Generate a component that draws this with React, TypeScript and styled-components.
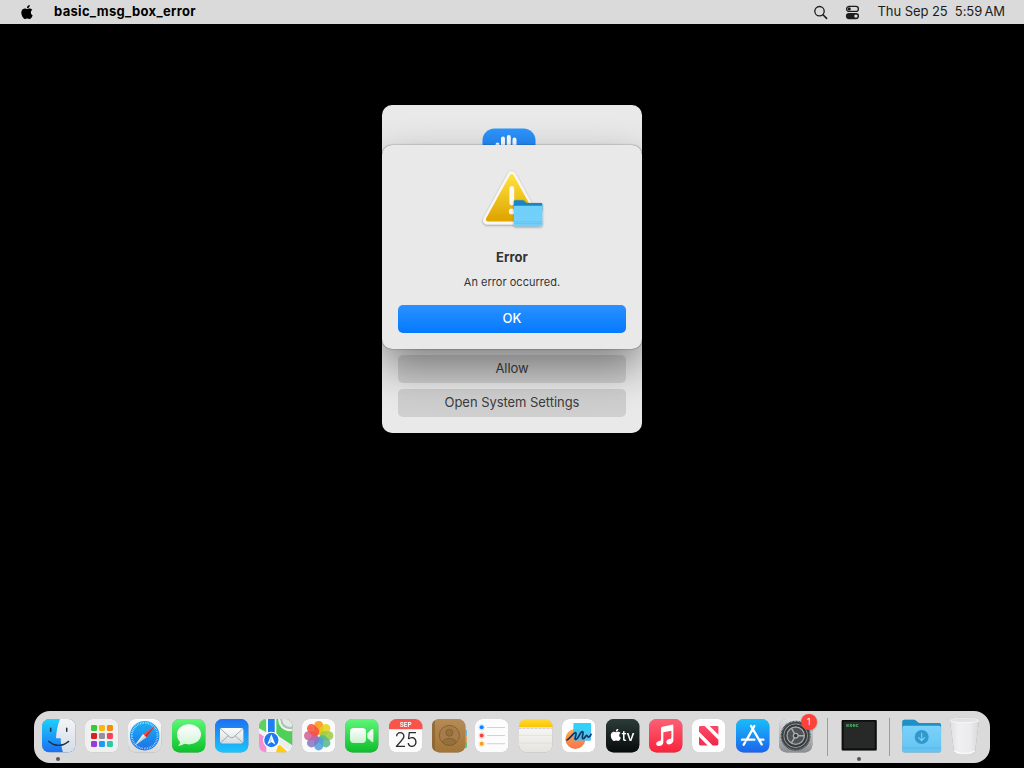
import React from 'react';
import styled, { createGlobalStyle } from 'styled-components';
import { SiApple } from 'react-icons/si';

const GlobalStyle = createGlobalStyle`
  * { box-sizing: border-box; }
  body { margin: 0; background: #000; overflow: hidden; }
`;

const Desktop = styled.div`
  display: flex;
  flex-direction: column;
  width: 1024px;
  height: 768px;
  background: #000;
  font-family: Inter, 'Liberation Sans', sans-serif;
  font-size: 13px;
`;

const MenuBar = styled.header`
  display: flex;
  align-items: center;
  justify-content: space-between;
  height: 24px;
  padding: 0 19px 0 20px;
  background: #dadada;
  color: #000;
`;

const MenuGroup = styled.div<{ $gap: number }>`
  display: flex;
  align-items: center;
  gap: ${(p) => p.$gap}px;
  height: 24px;
`;

const AppName = styled.span`
  padding-bottom: 2px;
  font-weight: 700;
  letter-spacing: 0.31px;
  line-height: 22px;
`;

const Clock = styled.span`
  padding-bottom: 2px;
  margin-left: 1px;
  color: #1c1c1c;
  letter-spacing: -0.07px;
  line-height: 22px;
  white-space: pre;
`;

const Workspace = styled.main`
  flex: 1;
  display: flex;
  flex-direction: column;
  align-items: center;
  justify-content: space-between;
  padding: 81px 0 5px;
`;

const Stack = styled.div`
  position: relative;
  width: 260px;
  height: 328px;
`;

const PermissionWindow = styled.section`
  display: flex;
  flex-direction: column;
  align-items: center;
  gap: 6px;
  height: 100%;
  padding: 23px 16px 16px;
  border-radius: 10px;
  background: #e9e9e9;
  overflow: hidden;
`;

const PermissionIcon = styled.svg`
  width: 54px;
  height: 54px;
  margin: 0 7px 0 0;
`;

const Spacer = styled.div`
  flex: 1;
`;

const ClipArea = styled.div`
  position: absolute;
  inset: 0;
  border-radius: 10px;
  overflow: hidden;
`;

const AlertWindow = styled.section`
  display: flex;
  flex-direction: column;
  align-items: center;
  width: 260px;
  height: 204px;
  margin-top: 40px;
  padding: 22px 16px 16px;
  border-radius: 10px;
  background: #e9e9e9;
  box-shadow: 0 0 1.5px rgba(0, 0, 0, 0.6), 0 18px 42px rgba(0, 0, 0, 0.44);
`;

const AlertIcon = styled.svg`
  width: 64px;
  height: 64px;
  overflow: visible;
`;

const AlertTitle = styled.h1`
  margin: 17px 0 0;
  color: #333;
  font-size: 13px;
  font-weight: 700;
  letter-spacing: 0.05px;
  line-height: 18px;
`;

const AlertMessage = styled.p`
  margin: 9px 0 0;
  color: #333;
  font-size: 11px;
  letter-spacing: 0.02px;
  line-height: 15px;
`;

const Button = styled.button<{ $primary?: boolean }>`
  flex: none;
  width: 228px;
  height: 28px;
  padding: 0 0 1px;
  border: 0;
  border-radius: 5px;
  background: ${(p) => (p.$primary ? 'linear-gradient(#2b91ff, #047aff)' : '#cfcfcf')};
  color: ${(p) => (p.$primary ? '#fff' : '#3c3c3c')};
  font-family: inherit;
  font-size: 13px;
  font-weight: ${(p) => (p.$primary ? 500 : 400)};
  letter-spacing: -0.05px;
  line-height: 27px;
`;

const DockBar = styled.nav`
  display: flex;
  width: 956px;
  height: 52px;
  padding: 0 2.7px;
  border-radius: 16px;
  background: #dadada;
`;

const DockItem = styled.div`
  position: relative;
  display: flex;
  flex-direction: column;
  align-items: center;
  gap: 4.4px;
  flex: 0 0 43.38px;
  padding-top: 8px;
`;

const Tile = styled.svg`
  flex: none;
  width: 33.4px;
  height: 33.4px;
  overflow: visible;
  filter: drop-shadow(0 0.5px 0.6px rgba(0, 0, 0, 0.3));
`;

const RunningDot = styled.span`
  width: 4px;
  height: 4px;
  border-radius: 50%;
  background: #555;
`;

const Badge = styled.span`
  position: absolute;
  top: 3px;
  right: 0.7px;
  width: 16px;
  height: 16px;
  border-radius: 50%;
  background: #ff4238;
  box-shadow: 0 0.5px 2px rgba(0, 0, 0, 0.35);
  color: #fff;
  font-size: 8.5px;
  line-height: 16px;
  text-align: center;
`;

const Separator = styled.div`
  flex: 0 0 19.4px;
  display: flex;
  justify-content: center;
  padding-top: 7px;
  &::before {
    content: '';
    width: 1px;
    height: 38px;
    background: #9c9c9c;
  }
`;

const Grad = ({ id, from, to, mid }: { id: string; from: string; to: string; mid?: string }) => (
  <linearGradient id={id} x1="0" y1="0" x2="0" y2="1">
    <stop offset="0" stopColor={from} />
    {mid && <stop offset="0.5" stopColor={mid} />}
    <stop offset="1" stopColor={to} />
  </linearGradient>
);

const Squircle = ({ fill }: { fill: string }) => <rect width="100" height="100" rx="22" fill={fill} />;

const Finder = () => (
  <>
    <defs>
      <Grad id="fnA" from="#1fd0fb" to="#1b6ef3" />
      <Grad id="fnB" from="#f4f4f6" to="#d5dce6" />
      <clipPath id="fnC"><rect width="100" height="100" rx="22" /></clipPath>
    </defs>
    <g clipPath="url(#fnC)">
      <rect width="100" height="100" fill="url(#fnA)" />
      <path d="M54 0C46 20 43 40 42 58H56C56 74 59 88 63 100H100V0Z" fill="url(#fnB)" />
      <path d="M26 28V37M74 28V37" stroke="#1c3347" strokeWidth="4.5" strokeLinecap="round" />
      <path d="M20 67Q50 91 80 67" stroke="#1c3347" strokeWidth="4" fill="none" strokeLinecap="round" />
    </g>
  </>
);

const launchColors = [
  ['#36c93a', '#f8b90b', '#f98a0c'],
  ['#d8202a', '#8e9498', '#fb3e5c'],
  ['#9a3bd6', '#1d97fa', '#2dc9a5'],
];

const Launchpad = () => (
  <>
    <Squircle fill="#f0f0f1" />
    {launchColors.map((row, r) =>
      row.map((c, i) => (
        <rect key={c} x={18 + i * 23.8} y={18 + r * 24} width="18" height="18" rx="4" fill={c} />
      )),
    )}
  </>
);

const Safari = () => (
  <>
    <defs>
      <Grad id="sfA" from="#fdfdfd" to="#d9d9db" />
      <Grad id="sfB" from="#1bb2f3" to="#1d6fe6" />
    </defs>
    <Squircle fill="url(#sfA)" />
    <circle cx="50" cy="50" r="44" fill="url(#sfB)" />
    <circle cx="50" cy="50" r="38.5" fill="none" stroke="#d6edff" strokeWidth="5.5" strokeDasharray="1.7 3.34" />
    <path d="M80 22L45 45L55 55Z" fill="#fb4b40" />
    <path d="M20 79L45 45L55 55Z" fill="#eceff2" />
    <path d="M80 22L50 50L55 55Z" fill="#d0282a" />
    <path d="M20 79L50 50L55 55Z" fill="#c4ccd4" />
  </>
);

const Messages = () => (
  <>
    <defs>
      <Grad id="msA" from="#5ff777" to="#0cc02b" />
      <Grad id="msB" from="#ffffff" to="#d2f4d6" />
    </defs>
    <Squircle fill="url(#msA)" />
    <path d="M51 16C71 16 87 29 87 46C87 63 71 76 51 76C46 76 40 75 36 74C31 78 25 80 18 80C22 77 24 73 24 69C18 63 15 55 15 46C15 29 31 16 51 16Z" fill="url(#msB)" />
  </>
);

const Mail = () => (
  <>
    <defs>
      <Grad id="mlA" from="#1d70f2" to="#1bc6fa" />
      <Grad id="mlB" from="#fcfcfc" to="#d7dbdf" />
    </defs>
    <Squircle fill="url(#mlA)" />
    <rect x="15" y="27" width="70" height="46" rx="6" fill="url(#mlB)" />
    <path d="M17 30L44 54Q50 59 56 54L83 30M17 71L40 50M83 71L60 50" fill="none" stroke="#8f989f" strokeWidth="2.4" />
  </>
);

const Maps = () => (
  <>
    <defs>
      <clipPath id="mpC"><rect width="100" height="100" rx="22" /></clipPath>
    </defs>
    <g clipPath="url(#mpC)">
      <rect width="100" height="100" fill="#f2f3f2" />
      <path d="M0 0H22V40L0 28Z" fill="#5cd160" />
      <path d="M50 0H100V100L50 48Z" fill="#4ed057" />
      <path d="M0 43L22 57V100H0Z" fill="#f38fcf" />
      <path d="M50 58L100 92V100H48Z" fill="#f8f8f8" />
      <path d="M56 82L62 77L88 100H50Z" fill="#ffcc10" />
      <path d="M48 44L102 80V104L48 66Z" fill="#ededed" />
      <circle cx="92" cy="2" r="31" fill="none" stroke="#f0f0f0" strokeWidth="7" />
      <circle cx="92" cy="2" r="27" fill="#b9bdbb" />
      <circle cx="92" cy="2" r="22" fill="#e4e8e4" />
      <rect x="22" width="30" height="60" fill="#f4f4f4" />
      <rect x="27" width="20" height="60" fill="#1d7ff3" />
      <circle cx="37" cy="63" r="25" fill="#fff" />
      <circle cx="37" cy="63" r="21.5" fill="#1b7cf2" />
      <path d="M37 46L49 76L37 69L25 76Z" fill="#fff" />
      <path d="M37 53V66L30 71Z" fill="#a8d2ff" />
    </g>
  </>
);

const petals = ['#fb9510', '#e5cf17', '#9dcb45', '#53b98b', '#4a9fe0', '#8576c5', '#cf6097', '#f8503f'];

const Photos = () => (
  <>
    <Squircle fill="#fbfbfb" />
    {petals.map((c, i) => (
      <rect key={c} x="36.5" y="6" width="27" height="41" rx="13.5" fill={c} opacity="0.86" transform={`rotate(${i * 45} 50 50)`} />
    ))}
  </>
);

const FaceTime = () => (
  <>
    <defs>
      <Grad id="ftA" from="#5ff777" to="#0dbd2b" />
      <Grad id="ftB" from="#ffffff" to="#c9f1cf" />
    </defs>
    <Squircle fill="url(#ftA)" />
    <rect x="15" y="27" width="48" height="45" rx="11" fill="url(#ftB)" />
    <path d="M67 43L80 31Q85 28 85 34V66Q85 72 80 68L67 57Z" fill="url(#ftB)" />
  </>
);

const Calendar = () => (
  <>
    <Squircle fill="#fbfbfb" />
    <path d="M0 31V22A22 22 0 0 1 22 0H78A22 22 0 0 1 100 22V31Z" fill="#f7544c" />
    <text x="50" y="24" textAnchor="middle" fontSize="19" fontWeight="600" fill="#fff">SEP</text>
    <text x="50" y="83" textAnchor="middle" fontSize="60" fontWeight="300" letterSpacing="-2" fill="#2c2c2c">25</text>
  </>
);

const Contacts = () => (
  <>
    <defs><Grad id="ctA" from="#b68b55" to="#a17438" /></defs>
    <rect x="86" y="32" width="18" height="20" rx="3" fill="#55bdf0" />
    <rect x="86" y="52" width="18" height="18" rx="3" fill="#fb9a20" />
    <rect x="86" y="69" width="18" height="18" rx="3" fill="#4bcf63" />
    <Squircle fill="url(#ctA)" />
    <path d="M9 4V96Q0 90 0 78V22Q0 9 9 4Z" fill="#86602f" opacity="0.65" />
    <g stroke="#815c2e" strokeWidth="2.5" fill="#94703f">
      <circle cx="52" cy="49" r="30" fill="#a67d48" />
      <circle cx="52" cy="41" r="10.5" />
      <path d="M31 70Q36 58 52 58Q68 58 73 70Q64 79 52 79Q40 79 31 70Z" />
    </g>
  </>
);

const Reminders = () => (
  <>
    <Squircle fill="#fcfcfc" />
    {['#1680f8', '#f2423c', '#f99b17'].map((c, i) => (
      <g key={c}>
        <circle cx="20" cy={25 + i * 24.5} r="8.5" fill="none" stroke={c} strokeOpacity="0.35" strokeWidth="1.8" />
        <circle cx="20" cy={25 + i * 24.5} r="6" fill={c} />
        <rect x="36" y={24 + i * 24.5} width="54" height="2.4" fill="#c8c8c8" />
      </g>
    ))}
  </>
);

const Notes = () => (
  <>
    <defs>
      <Grad id="ntA" from="#fbfbfa" to="#e6e4de" />
      <Grad id="ntB" from="#ffda35" to="#fbc403" />
    </defs>
    <Squircle fill="url(#ntA)" />
    <path d="M0 25V22A22 22 0 0 1 22 0H78A22 22 0 0 1 100 22V25Z" fill="url(#ntB)" />
    <path d="M0 28H100" stroke="#999" strokeWidth="2" strokeDasharray="2 2" />
    <path d="M0 49H100M0 72H100" stroke="#d6d5d2" strokeWidth="1.6" />
  </>
);

const Freeform = () => (
  <>
    <defs>
      <Grad id="ffA" from="#16d2fb" to="#56b6ee" />
      <Grad id="ffB" from="#ffac51" to="#f77449" />
    </defs>
    <Squircle fill="#fff" />
    <circle cx="40" cy="60" r="30" fill="url(#ffB)" />
    <rect x="34" y="12" width="53" height="53" rx="3" fill="url(#ffA)" fillOpacity="0.92" />
    <path d="M15 63C24 58 36 39 41 41C46 43 35 60 41 61C48 62 55 37 61 38C67 39 57 58 63 59C68 60 71 48 74 49C77 50 76 55 80 54Q84 53 87 46" fill="none" stroke="#0d3764" strokeWidth="5" strokeLinecap="round" strokeLinejoin="round" />
  </>
);

const AppleTV = () => (
  <>
    <defs><Grad id="tvA" from="#2c3c38" to="#070b0b" /></defs>
    <Squircle fill="url(#tvA)" />
    <SiApple x={11} y={29} size={37} color="#fff" />
    <text x="47" y="66" fontSize="42" fontWeight="500" letterSpacing="-1" fill="#fff">tv</text>
  </>
);

const Music = () => (
  <>
    <defs><Grad id="muA" from="#fc6076" to="#fa233b" /></defs>
    <Squircle fill="url(#muA)" />
    <path d="M36 28Q36 24 40 23L68 17Q73 16 73 21V63C73 71 66 76 60 76C49 76 49 62 61 60L65 59Q67 58 67 55V35L43 40V69C43 77 37 81 30 81C18 81 19 68 30 66L34 65Q36 64 36 61Z" fill="#fff" />
  </>
);

const News = () => (
  <>
    <defs><Grad id="nwA" from="#fc4a69" to="#ee2949" /></defs>
    <Squircle fill="#fefefe" />
    <path d="M21 25Q21 21 25 21H38L79 62V75Q79 79 75 79H62L21 38Z" fill="url(#nwA)" />
    <path d="M53 21H75Q79 21 79 25V47Z" fill="#fa4463" />
    <path d="M21 53V75Q21 79 25 79H47Z" fill="#f23354" />
  </>
);

const AppStore = () => (
  <>
    <defs><Grad id="asA" from="#18bdfb" to="#1b65ed" /></defs>
    <Squircle fill="url(#asA)" />
    <g stroke="#fff" strokeWidth="7" strokeLinecap="round" fill="none">
      <path d="M55 21L31 64M45 21L77 76M18 62H55M72 62H82M27 70L23 77" />
    </g>
  </>
);

const Settings = () => (
  <>
    <defs><Grad id="stA" from="#dde0e2" to="#8b8f91" mid="#b5b8ba" /></defs>
    <Squircle fill="url(#stA)" />
    <circle cx="50" cy="50" r="42" fill="#414447" />
    <circle cx="50" cy="50" r="43" fill="none" stroke="#3b3e41" strokeWidth="4" strokeDasharray="2.5 1.9" />
    <circle cx="50" cy="50" r="35" fill="none" stroke="#94989b" strokeWidth="3" />
    <circle cx="50" cy="50" r="26" fill="#505356" stroke="#a2a6a9" strokeWidth="4" />
    <circle cx="50" cy="50" r="31" fill="none" stroke="#34373a" strokeWidth="4" />
    <path d="M50 50H76M50 50L37 27.5M50 50L37 72.5" stroke="#a8acaf" strokeWidth="4.5" />
    <circle cx="50" cy="50" r="7" fill="#303336" stroke="#a8acaf" strokeWidth="4" />
  </>
);

const Exec = () => (
  <>
    <rect x="-1" y="3" width="105" height="91" rx="3" fill="#0d0e0e" />
    <rect x="5" y="8" width="93" height="80" fill="#272828" />
    <text x="12" y="25" fontSize="16" fontWeight="700" fontFamily="'Liberation Mono', monospace" fill="#46d06a">exec</text>
  </>
);

const Downloads = () => (
  <>
    <defs><Grad id="dlA" from="#7bd2fb" to="#63c2f1" /></defs>
    <path d="M-8 8Q-8 2 -2 2H26Q30 2 33 5L38 10Q40 12 44 12H102Q108 12 108 18V40H-8Z" fill="#1b90c9" />
    <path d="M-8 27Q-8 20 -1 20H101Q108 20 108 27V94Q108 100 102 100H-2Q-8 100 -8 94Z" fill="url(#dlA)" />
    <path d="M-8 87H108" stroke="#4ba9d8" strokeWidth="1.5" />
    <circle cx="50" cy="54" r="21" fill="#3299cd" />
    <path d="M50 43V64M41 56L50 65L59 56" fill="none" stroke="#82d3fa" strokeWidth="3.2" strokeLinecap="round" strokeLinejoin="round" />
  </>
);

const Trash = () => (
  <>
    <defs>
      <linearGradient id="trA">
        <stop offset="0" stopColor="#dedfe2" />
        <stop offset="0.3" stopColor="#f0f0f2" />
        <stop offset="0.7" stopColor="#ebebed" />
        <stop offset="1" stopColor="#d6d7da" />
      </linearGradient>
    </defs>
    <path d="M6 5L18 97Q20 107 49 107Q79 107 81 97L93 5Z" fill="url(#trA)" />
    <ellipse cx="49.5" cy="4" rx="43.5" ry="7" fill="#e1e2e4" stroke="#fafafa" strokeWidth="2.4" />
    <path d="M19 96Q49 111 80 96" fill="none" stroke="#fafafa" strokeWidth="3" />
  </>
);

type DockEntry = { name: string; art?: () => React.ReactElement; running?: boolean; badge?: string };

const dockEntries: DockEntry[] = [
  { name: 'finder', art: Finder, running: true },
  { name: 'launchpad', art: Launchpad },
  { name: 'safari', art: Safari },
  { name: 'messages', art: Messages },
  { name: 'mail', art: Mail },
  { name: 'maps', art: Maps },
  { name: 'photos', art: Photos },
  { name: 'facetime', art: FaceTime },
  { name: 'calendar', art: Calendar },
  { name: 'contacts', art: Contacts },
  { name: 'reminders', art: Reminders },
  { name: 'notes', art: Notes },
  { name: 'freeform', art: Freeform },
  { name: 'tv', art: AppleTV },
  { name: 'music', art: Music },
  { name: 'news', art: News },
  { name: 'appstore', art: AppStore },
  { name: 'settings', art: Settings, badge: '1' },
  { name: 'divider-apps' },
  { name: 'exec', art: Exec, running: true },
  { name: 'divider-files' },
  { name: 'downloads', art: Downloads },
  { name: 'trash', art: Trash },
];

const Dock = () => (
  <DockBar>
    {dockEntries.map(({ name, art: Art, running, badge }) =>
      Art ? (
        <DockItem key={name}>
          <Tile viewBox="0 0 100 100"><Art /></Tile>
          {running && <RunningDot />}
          {badge && <Badge>{badge}</Badge>}
        </DockItem>
      ) : (
        <Separator key={name} />
      ),
    )}
  </DockBar>
);

const WarningArt = () => (
  <AlertIcon viewBox="0 0 64 64">
    <defs>
      <Grad id="wnA" from="#ffe03a" to="#dfa500" />
      <Grad id="wnF" from="#6fd0fa" to="#74d0fb" />
      <filter id="wnS" x="-20%" y="-20%" width="140%" height="150%">
        <feDropShadow dx="0" dy="0.8" stdDeviation="0.8" floodOpacity="0.4" />
      </filter>
    </defs>
    <g filter="url(#wnS)">
      <path d="M31.7 8.5L7.2 53.2H56.2Z" fill="#f8f7f2" stroke="#f8f7f2" strokeWidth="8.4" strokeLinejoin="round" />
      <path d="M31.7 9.5L8.3 52.2H55.2Z" fill="url(#wnA)" stroke="url(#wnA)" strokeWidth="4.6" strokeLinejoin="round" />
      <rect x="29.4" y="19" width="4.8" height="19.5" rx="2.4" fill="#faf9f2" />
      <circle cx="31.8" cy="44.4" r="2.9" fill="#faf9f2" />
    </g>
    <g filter="url(#wnS)">
      <path d="M33.8 34.5Q33.8 33.3 35 33.3H42.5Q44 33.3 45 34.5L46.5 36H61Q62.3 36 62.3 37.2V44H33.8Z" fill="#1387c3" />
      <path d="M33.8 39.6Q33.8 38.7 34.8 38.7H61.3Q62.3 38.7 62.3 39.6V58.2Q62.3 59.3 61 59.3H35Q33.8 59.3 33.8 58.2Z" fill="url(#wnF)" />
      <path d="M33.8 54.8H62.3M33.8 56.6H62.3" stroke="#52b1de" strokeWidth="0.4" />
    </g>
  </AlertIcon>
);

const HandArt = () => (
  <PermissionIcon viewBox="0 0 54 54">
    <defs><Grad id="hdA" from="#2f96fc" to="#0a6cf0" /></defs>
    <rect x="0.5" y="0.5" width="53" height="53" rx="12" fill="url(#hdA)" />
    <path d="M15.5 27V16.5M21 27V10.5M26.8 27V9M32.5 27V11.5" stroke="#fff" strokeWidth="4" strokeLinecap="round" />
  </PermissionIcon>
);

const ControlCenterArt = () => (
  <svg width="15" height="15" viewBox="0 0 15 15" fill="none">
    <rect x="1.6" y="1.4" width="11.8" height="5" rx="2.5" stroke="#1c1c1c" strokeWidth="1.3" />
    <circle cx="4.2" cy="3.9" r="1.6" fill="#1c1c1c" />
    <rect x="0.9" y="8" width="13.2" height="6.2" rx="3.1" fill="#1c1c1c" />
    <circle cx="10.9" cy="11.1" r="1.7" fill="#dadada" />
  </svg>
);

export default function App() {
  return (
    <>
      <GlobalStyle />
      <Desktop>
        <MenuBar>
          <MenuGroup $gap={20}>
            <SiApple size={14} color="#000" />
            <AppName>basic_msg_box_error</AppName>
          </MenuGroup>
          <MenuGroup $gap={17}>
            <svg width="15" height="15" viewBox="0 0 15 15" fill="none" stroke="#1c1c1c" strokeLinecap="round">
              <circle cx="6.5" cy="6.2" r="4.7" strokeWidth="1.3" />
              <path d="M10 9.8L13.6 13.4" strokeWidth="1.6" />
            </svg>
            <ControlCenterArt />
            <Clock>{'Thu Sep 25  5:59\u2009AM'}</Clock>
          </MenuGroup>
        </MenuBar>
        <Workspace>
          <Stack>
            <PermissionWindow>
              <HandArt />
              <Spacer />
              <Button>Allow</Button>
              <Button>Open System Settings</Button>
            </PermissionWindow>
            <ClipArea>
              <AlertWindow>
                <WarningArt />
                <AlertTitle>Error</AlertTitle>
                <AlertMessage>An error occurred.</AlertMessage>
                <Spacer />
                <Button $primary>OK</Button>
              </AlertWindow>
            </ClipArea>
          </Stack>
          <Dock />
        </Workspace>
      </Desktop>
    </>
  );
}
